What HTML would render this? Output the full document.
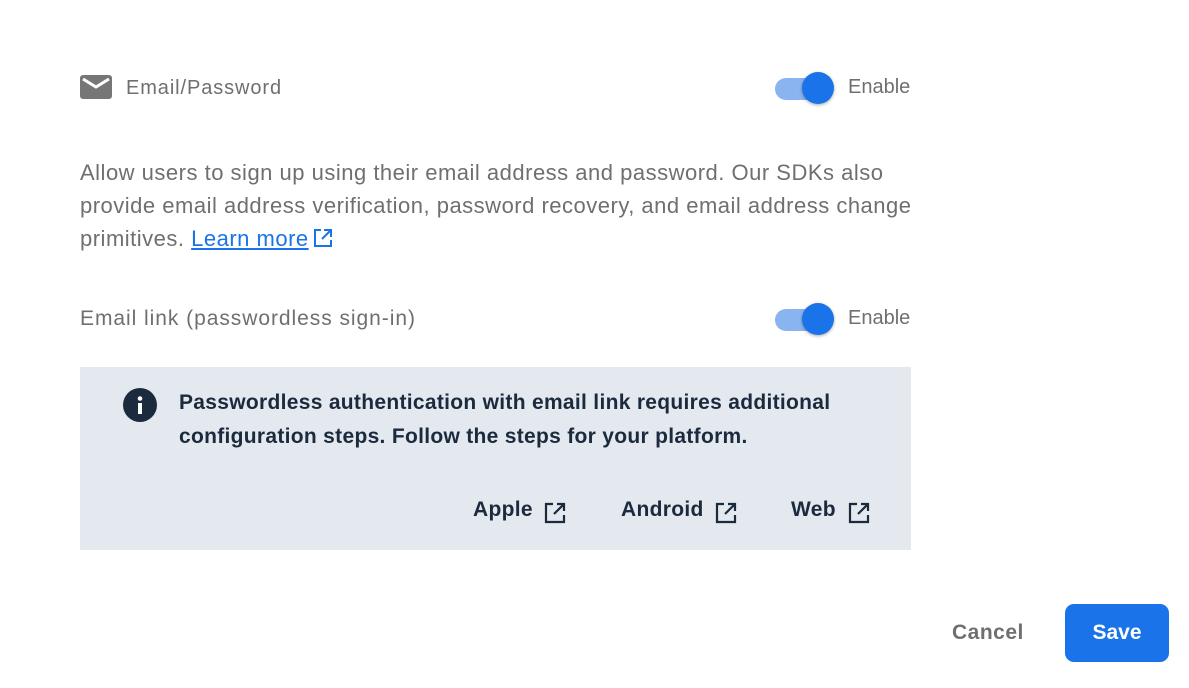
<!DOCTYPE html>
<html><head><style>
body{margin:0;width:1189px;height:688px;background:#fff;font-family:"Liberation Sans",Arial,sans-serif;position:relative;overflow:hidden}
.a{position:absolute;white-space:nowrap}
.g{color:#6f6f6f}
.track{position:absolute;width:58px;height:22px;border-radius:11px;background:#8ab4f0}
.knob{position:absolute;width:32px;height:32px;border-radius:50%;background:#1a73e8;box-shadow:0 1px 3px rgba(0,0,0,.35)}
.box{position:absolute;left:80px;top:367px;width:831px;height:183px;background:#e4e8ef}
.nv{color:#1b2a3d;font-weight:bold;font-size:21px}
</style></head><body>
<svg class="a" style="left:80px;top:75px" width="32" height="24" viewBox="0 0 32 24"><rect x="0" y="0" width="32" height="24" rx="3" fill="#767676"/><path d="M3 4 L16 12 L29 4" stroke="#fff" stroke-width="3" fill="none"/></svg>
<div class="a g" style="left:126px;top:77px;font-size:20px;letter-spacing:0.9px">Email/Password</div>
<div class="track" style="left:775px;top:78px"></div><div class="knob" style="left:802px;top:72px"></div>
<div class="a g" style="left:848px;top:76px;font-size:20px">Enable</div>
<div class="a g" style="left:80px;top:156px;font-size:22px;letter-spacing:0.5px;line-height:33px">Allow users to sign up using their email address and password. Our SDKs also<br>provide email address verification, password recovery, and email address change<br>primitives. <span style="color:#1a73e8;text-decoration:underline">Learn more</span><svg width="22" height="22" viewBox="0 0 22 22" style="vertical-align:-3px;margin-left:3px"><path d="M9 3H3v16h16v-6M12 3h7v7M19 3l-9 9" stroke="#1a73e8" stroke-width="2" fill="none"/></svg></div>
<div class="a g" style="left:80px;top:307px;font-size:21px;letter-spacing:0.95px">Email link (passwordless sign-in)</div>
<div class="track" style="left:775px;top:309px"></div><div class="knob" style="left:802px;top:303px"></div>
<div class="a g" style="left:848px;top:307px;font-size:20px">Enable</div>
<div class="box"></div>
<svg class="a" style="left:123px;top:388px" width="34" height="34" viewBox="0 0 34 34"><circle cx="17" cy="17" r="17" fill="#1b2a3d"/><rect x="15" y="15" width="4" height="11" fill="#fff"/><circle cx="17" cy="10.5" r="2.3" fill="#fff"/></svg>
<div class="a nv" style="left:179px;top:386px;line-height:34px;letter-spacing:0.3px">Passwordless authentication with email link requires additional<br>configuration steps. Follow the steps for your platform.</div>
<div class="a nv" style="left:473px;top:498px;letter-spacing:0.3px">Apple</div>
<div class="a nv" style="left:621px;top:498px;letter-spacing:0.3px">Android</div>
<div class="a nv" style="left:791px;top:498px;letter-spacing:0.3px">Web</div>
<svg class="a" style="left:543px;top:501px" width="24" height="24" viewBox="0 0 24 24"><path d="M10 3H3v18h18v-7M14 3h7v7M21 3L11 13" stroke="#1b2a3d" stroke-width="2.2" fill="none"/></svg>
<svg class="a" style="left:714px;top:501px" width="24" height="24" viewBox="0 0 24 24"><path d="M10 3H3v18h18v-7M14 3h7v7M21 3L11 13" stroke="#1b2a3d" stroke-width="2.2" fill="none"/></svg>
<svg class="a" style="left:847px;top:501px" width="24" height="24" viewBox="0 0 24 24"><path d="M10 3H3v18h18v-7M14 3h7v7M21 3L11 13" stroke="#1b2a3d" stroke-width="2.2" fill="none"/></svg>
<div class="a" style="left:952px;top:621px;font-size:21px;font-weight:bold;color:#6f6f6f;letter-spacing:0.5px">Cancel</div>
<div class="a" style="left:1065px;top:604px;width:104px;height:58px;border-radius:9px;background:#1a73e8;color:#fff;font-size:21px;font-weight:bold;text-align:center;line-height:58px">Save</div>
</body></html>
